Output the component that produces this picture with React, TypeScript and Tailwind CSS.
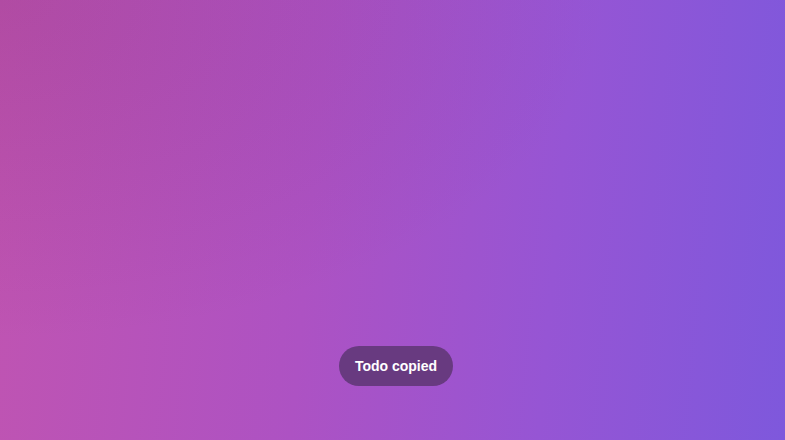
export default function App() {
  return (
    <div className="relative flex h-screen w-full flex-col items-center justify-end bg-[radial-gradient(ellipse_at_top_left,rgba(70,10,60,0.12),rgba(70,10,60,0)_55%),linear-gradient(95deg,#c054b1_0%,#ad52c3_40%,#9655d4_70%,#7e58dc_100%)] pb-[54px] font-['Liberation_Sans',Arial,sans-serif]">
      <div className="ml-[7px] flex h-10 items-center rounded-full bg-[#683a80] px-4 text-sm font-bold text-white">
        Todo copied
      </div>
    </div>
  )
}
